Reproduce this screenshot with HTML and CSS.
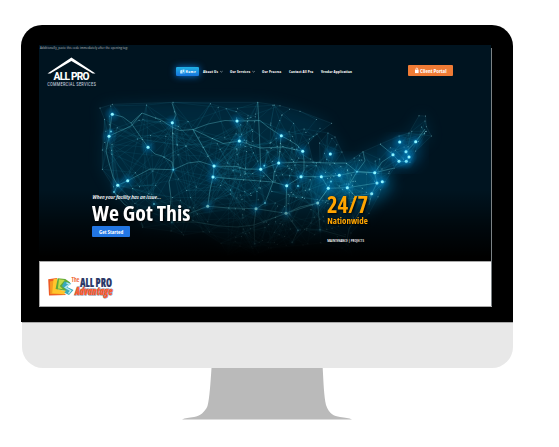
FILE: index.html
```html
<!DOCTYPE html>
<html lang="en">
<head>
<meta charset="utf-8">
<title>All Pro Commercial Services</title>
<link rel="stylesheet" href="styles.css">
</head>
<body>
<main class="monitor">
  <div class="bezel">
    <div class="screen">
      <section class="hero">
        <svg class="map" id="map" viewBox="39 45 452 216" aria-hidden="true"></svg>
        <div class="fade"></div>
        <div class="content">
          <svg class="notice" viewBox="0 0 100 7"><text x="1" y="4.3" textLength="88" lengthAdjust="spacingAndGlyphs">Additionally, paste this code immediately after the opening tag:</text></svg>
          <header class="header">
            <svg class="logo" viewBox="0 0 50 31">
              <path d="M.5 16.600 24.400.5 48.500 16.600h-2.800L24.400 4 3.200 16.600z" fill="#fff"/>
              <text class="brand" x="6.6" y="22.500" textLength="36" lengthAdjust="spacing">ALL PRO</text>
              <text class="sub" x=".3" y="28.700" textLength="48.500" lengthAdjust="spacing">COMMERCIAL SERVICES</text>
            </svg>
            <nav class="nav">
              <a class="home"><svg viewBox="0 0 23 9"><path d="M4.2 3.6 6 2.8v3.6H4.2zM6.400 2.800l2-.4v4h-.7V5H7v1.400h-.6z" fill="#bce9ff"/><text x="9.4" y="6.1" textLength="10.4" lengthAdjust="spacing">Home</text></svg></a>
              <svg class="about" viewBox="0 0 23 9"><text x="0" y="6.1" textLength="15" lengthAdjust="spacing">About Us</text><path class="chevron" d="m17.200 4.200 1.200.9 1.200-.9"/></svg>
              <svg class="services" viewBox="0 0 27 9"><text x="0" y="6.1" textLength="20.2" lengthAdjust="spacing">Our Services</text><path class="chevron" d="m22.400 4.200 1.200.9 1.200-.9"/></svg>
              <svg class="process" viewBox="0 0 20 9"><text x="0" y="6.1" textLength="19.2" lengthAdjust="spacing">Our Process</text></svg>
              <svg class="contact" viewBox="0 0 25 9"><text x="0" y="6.1" textLength="24.2" lengthAdjust="spacing">Contact All Pro</text></svg>
              <svg class="vendor" viewBox="0 0 32 9"><text x="0" y="6.1" textLength="31" lengthAdjust="spacing">Vendor Application</text></svg>
            </nav>
            <a class="portal"><svg viewBox="0 0 45 11"><path d="M7 4.800h3.600v3.300H7z" fill="#fff"/><path d="M7.900 5V4a.9.9 0 0 1 1.800 0v1" fill="none" stroke="#fff" stroke-width=".7"/><text x="12" y="7.900" textLength="26.5" lengthAdjust="spacingAndGlyphs">Client Portal</text></svg></a>
          </header>
          <div class="copy">
            <div class="pitch">
              <svg class="tagline" viewBox="0 0 80 9"><text x=".5" y="6.100" textLength="68.5" lengthAdjust="spacingAndGlyphs">When your facility has an issue...</text></svg>
              <svg class="headline" viewBox="0 0 110 24"><text x="0" y="18.500" textLength="98.5" lengthAdjust="spacingAndGlyphs">We Got This</text></svg>
              <a class="start"><svg viewBox="0 0 38 11"><text x="7" y="7.600" textLength="24.2" lengthAdjust="spacingAndGlyphs">Get Started</text></svg></a>
            </div>
            <div class="coverage">
              <svg class="hours" viewBox="0 0 50 22"><text x="0" y="18.800" textLength="41" lengthAdjust="spacingAndGlyphs">24/7</text></svg>
              <svg class="nation" viewBox="0 0 50 12"><text x=".3" y="7.500" textLength="40.5" lengthAdjust="spacingAndGlyphs">Nationwide</text></svg>
              <svg class="kinds" viewBox="0 0 50 7"><text x=".3" y="5" textLength="36.7" lengthAdjust="spacingAndGlyphs">MAINTENANCE | PROJECTS</text></svg>
            </div>
          </div>
        </div>
      </section>
      <section class="advantage">
        <svg viewBox="0 0 68 23">
          <path d="M.2 2.200 9 1.100l.5 12.500 9 4.500-17.500.3z" fill="#ed5b25"/>
          <path d="M2 4.500 8 3l2.200 12 7 2.500-15-.5z" fill="#f59a20"/>
          <path d="M5.500 2.200 9.500 1.600 8.600 12l9.600 2.300-2 3-12-1z" fill="#ffc52c"/>
          <path d="m9.700 1.200 7.600.8 5 3.600-6 4.300 3.600 4.300-12.300-2.200z" fill="#5fa838"/>
          <path d="m11 2.300 5.800.8-5.100 6 3.200 3.100-5-.8z" fill="#c3db45"/>
          <path d="m16.500 4.500 6.800 2.100-4.200 3.300 6.400 3-4.500 5.200-4.600-2.300 2-2.800-4.500-4z" fill="#37a8bc"/>
          <path d="m18.400 5.800 3.200 1.300-4.400 3.300 5.600 3.200-2.300 2.900" fill="none" stroke="#b5e8f0" stroke-width="1.300"/>
          <text class="the" x="23.500" y="5.300" textLength="8" lengthAdjust="spacingAndGlyphs">The</text>
          <text class="allpro" x="32" y="9.600" textLength="32" lengthAdjust="spacingAndGlyphs">ALL PRO</text>
          <text class="adv" x="27" y="17.900" textLength="37.500" lengthAdjust="spacingAndGlyphs">Advantage</text>
        </svg>
      </section>
      <div class="scrollbar"></div>
    </div>
  </div>
  <div class="chin"></div>
  <svg class="stand" viewBox="0 0 170 52"><path d="M29.500 0H140.700C141.500 15 142 28 144 37c3 9 8 11 14 12 5 1 9 1 12 2.500H0c3-1.500 7-1.500 12-2.500 6-1 11-5 13.500-11C27.500 31 28.500 15 29.500 0z"/></svg>
</main>
<script src="map.js"></script>
</body>
</html>
```
FILE: styles.css
```css
* { box-sizing: border-box; }
body { margin: 0; background: #fff; font-family: "Open Sans", "Noto Sans", sans-serif; }
svg { display: block; flex: none; overflow: visible; }
text { font-family: "Open Sans", "Noto Sans", sans-serif; font-stretch: 75%; font-weight: 700; fill: #fff; }

.monitor { width: 559px; height: 447px; padding: 25px 0 0 21px; overflow: hidden; }
.bezel { width: 492px; height: 297px; padding: 20px 0 0 18px; background: #000; border-radius: 21px 21px 0 0; }
.screen { position: relative; width: 453px; height: 262px; background: #000; }
.chin { width: 491px; height: 46px; margin-left: .5px; background: #e8e8e8; border-top: 1px solid #aaa; border-radius: 0 0 21px 21px; }
.stand { width: 170px; height: 52px; margin-left: 161px; fill: #bababa; }
.scrollbar { position: absolute; right: 0; top: 3px; width: 1px; height: 258px; background: #7b8285; }

.hero { position: relative; width: 452px; height: 216px; background: #001420; overflow: hidden; }
.map { position: absolute; inset: 0; width: 452px; height: 216px; }
.fade { position: absolute; inset: 0; background: linear-gradient(transparent 67%, rgba(0,0,0,.6) 84%, #000 98%); }
.content { position: relative; }

.notice { width: 100px; height: 7px; }
.notice text { font-size: 4px; font-weight: 400; fill: #a5abad; }
.header { display: flex; align-items: flex-start; height: 34px; margin-top: 5px; padding-left: 8px; }
.logo { width: 50px; height: 31px; }
.brand { font-family: "Roboto", sans-serif; font-size: 10.200px; font-weight: 800; font-stretch: 100%; }
.sub { font-family: "Roboto", sans-serif; font-size: 4.600px; font-weight: 400; fill: #d3dbe0; }
.nav { display: flex; height: 9px; margin: 10px 0 0 78.500px; }
.nav svg { height: 9px; }
.nav text { font-size: 3.900px; }
.home { width: 23px; height: 9px; border-radius: 1px; background: linear-gradient(#20b2e5, #1674dd); box-shadow: 0 0 7px #0875d9; }
.home svg { width: 23px; }
.about { width: 23px; margin-left: 4.300px; }
.services { width: 27px; margin-left: 4.200px; }
.process { width: 20px; margin-left: 5.500px; }
.contact { width: 25px; margin-left: 7px; }
.vendor { width: 32px; margin-left: 7px; }
.chevron { fill: none; stroke: #b5c2c9; stroke-width: .6; }
.portal { width: 45px; height: 11px; margin: 8px 0 0 54.500px; background: #ef7b35; border-radius: 1px; }
.portal svg { width: 45px; height: 11px; }
.portal text { font-size: 5.600px; }

.copy { display: flex; padding: 102px 0 0 53px; }
.pitch { width: 235px; }
.tagline { width: 80px; height: 9px; }
.tagline text { font-size: 5.700px; font-style: italic; font-weight: 600; }
.headline { width: 110px; height: 24px; filter: drop-shadow(1px 1px 1px #000); }
.headline text { font-size: 22px; }
.start { display: block; width: 38px; height: 11px; background: #2276e3; border-radius: 1px; }
.start svg { width: 38px; height: 11px; }
.start text { font-size: 5.700px; }
.coverage { padding-top: 1px; }
.hours { width: 50px; height: 22px; }
.hours text { font-size: 22.500px; fill: #ffa500; }
.nation { width: 50px; height: 12px; }
.nation text { font-size: 8.800px; fill: #ffa500; }
.hours, .nation { filter: drop-shadow(1px 1px 1px #000); }
.kinds { width: 50px; height: 7px; margin-top: 9px; }
.kinds text { font-size: 3.900px; font-weight: 600; }

.advantage { width: 453px; height: 46px; padding: 15px 0 0 7.500px; background: #fff; border: solid #aaa; border-width: 1px 0 1px 1px; }
.advantage svg { width: 68px; height: 23px; }
.the { fill: #ef6a38; font-size: 6.500px; }
.allpro { fill: #293766; font-size: 12.500px; font-weight: 800; stroke: #293766; stroke-width: .2; }
.adv { fill: #ff5b2c; font-size: 10px; font-weight: 800; font-style: italic; paint-order: stroke; stroke: #7c8399; stroke-width: 1; }
```
FILE: map.js
```js
// Network map: an outline of nodes, a fine mesh, highways and glowing cities.
const outline = [[100,108],[112.3,104.3],[173,102.3],[257.8,102.3],[280,105.7],[300,111.3],[331.6,123.3],[317,134],[308.4,143],[313,162],[320,162],[319.500,143],[328,133],[335,137],[342,152],[334.400,163.300],[346.500,163.300],[363,151.700],[380.400,144],[399,136],[409,133],[419,115.700],[425.500,116],[426.400,126.700],[431.400,136],[415.700,151],[410,162.300],[394,168.300],[385,181.700],[378,196.700],[369,213.300],[351,233],[348,245],[353,256.700],[342,248],[321,243],[303,245],[271,248],[255,255],[240,246],[228,255],[221,243.300],[203,231.700],[183.600,235],[171,231],[142.600,227.300],[132,210],[116,196.700],[113.400,186.700],[102.300,169.300],[102.300,150],[104.500,119.300]];
const cities = [[112.300,114.300],[109,136.300],[172.300,122.700],[237,121],[239.300,141],[148,147.300],[214,166],[213,177],[260.700,169.300],[127.700,180.700],[117.700,185.300],[281.300,135.700],[302.700,151.300],[330.300,154],[278.700,163],[301,176.700],[321.300,176.700],[339.300,175.300],[374.700,172.700],[286.700,185.700],[328.300,188.300],[347.300,187.700],[377,183],[382.300,181.700],[399.700,142],[415.700,141.700],[406,151.700],[393,154.700],[399,161.300],[406.300,161.300],[409,157],[317.700,203],[371.700,193.700],[286,213.300],[207.700,206.300],[256,208.700]];
const towns = [[173.300,169.700],[264.300,165.700],[357,171.700],[111,131.500],[171.700,222.300],[298,230.300],[292.300,242.300],[254.700,243.700],[320,229.700],[154,204],[114,192],[331,181.500],[265,203],[298,186]];
const routes = [
  "112,114 123,117 131,123 142,113 161,120 172,127 180,130.500 193,129.500 208,124 225,120.500 237,121 260,120.500 268,127 281,135.700 289,140 297,145 302.700,151.300 304,160 304,170 301,176.700",
  "131,123 138,133 148,147.300 155,154 162,156 172,162 173.300,169.700 169,182 171,198 170,213 171.700,222",
  "109,136 120,131 131,126 142,113",
  "112,114 109,136 106,151 109,163 113,177 117.700,185.300 114,192 124,204 139,215 143,227",
  "117.700,185.300 127.700,180.700 150,169 173.300,169.700 188,163 200,161.500 214,166 237,166.500 245,169 260.700,169.300 278.700,163 304,162 330,163 346,163",
  "172,103 176,115 172.300,122.700 173,150 173.300,169.700",
  "193,129.500 214,166 213,177 210,190 207.700,206.300 190,213 171.700,222",
  "193,129.500 223,143.500 239.300,141 260,148 283,147 302.700,151.300",
  "257.800,102.500 259,127 260,150 260.700,169.300 273,182 286.700,185.700 301,176.700 321.300,176.700 339.300,175.300 357,171.700 374.700,172.700 393,168.300",
  "213,177 235,179 260,181 273,182 265,203 256,208.700 254,225 254.700,243.700",
  "207.700,206.300 230,208 256,208.700 286,213.300 317.700,203 328.300,188.300 347.300,187.700 377,183",
  "281,135.700 280,150 278.700,163 274,173 273,182",
  "286.700,185.700 286,213.300 298,230.300 292.300,242.300",
  "321.300,176.700 328.300,188.300 317.700,203 320,229.700 346,237",
  "363,152 365,161 357,171.700 347.300,187.700 355,196 371.700,193.700 369,205",
  "380,144 393,154.700 399,161.300 406.300,161.300 409,157 406,151.700 415.700,141.700 425,129",
  "374.700,172.700 377,183 371.700,193.700 360,211 349,229 346,245",
  "171.700,222 195,222 220,226 237,227 254,225 286,213.300",
  "317.700,203 300,207 286,213.300", "346,163 357,171.700 374.700,172.700 382,162 393,154.700"
];
let seed = 719;
const rnd = () => (seed = (seed * 16807) % 2147483647) / 2147483647;
const inside = (x, y) => {
  let hit = false;
  for (let i = 0, j = outline.length - 1; i < outline.length; j = i++) {
    const [a, b] = outline[i], [c, d] = outline[j];
    if ((b > y) !== (d > y) && x < (c - a) * (y - b) / (d - b) + a) hit = !hit;
  }
  return hit;
};
const nodes = [...outline, ...cities, ...towns];
while (nodes.length < 430) {
  const x = 100 + rnd() * 332, y = 102 + rnd() * 154;
  if (inside(x, y) && rnd() < (x > 235 ? 1 : .28)) nodes.push([x, y]);
}
let mesh = "";
nodes.forEach((p, i) => {
  const reach = p[0] < 235 ? 55 : 27;
  nodes.slice(i + 1).forEach(q => {
    const d = Math.hypot(p[0] - q[0], p[1] - q[1]);
    if (d < reach && rnd() < .17 && inside((p[0] + q[0]) / 2, (p[1] + q[1]) / 2))
      mesh += `M${p[0].toFixed(1)} ${p[1].toFixed(1)}L${q[0].toFixed(1)} ${q[1].toFixed(1)}`;
  });
});
const edge = outline.map(p => p.join()).join(" ");
const dot = (p, r, c, o) => `<circle cx="${p[0]}" cy="${p[1]}" r="${r}" fill="${c}" opacity="${o}"/>`;
document.getElementById("map").innerHTML = `
  <defs>
    <radialGradient id="glow"><stop stop-color="#16b6ff" stop-opacity=".9"/><stop offset=".3" stop-color="#008bd0" stop-opacity=".35"/><stop offset="1" stop-color="#0078bc" stop-opacity="0"/></radialGradient>
    <filter id="soft" x="-20%" y="-20%" width="140%" height="140%"><feGaussianBlur stdDeviation="7"/></filter>
  </defs>
  <polygon points="${edge}" fill="#00547a" opacity=".26" filter="url(#soft)"/>
  <polygon points="${edge}" fill="#00405b" fill-opacity=".15" stroke="#388ba0" stroke-opacity=".35" stroke-width=".4"/>
  <ellipse cx="350" cy="185" rx="42" ry="24" fill="#0080b5" opacity=".4" filter="url(#soft)"/>
  <ellipse cx="403" cy="153" rx="18" ry="15" fill="#007cc0" opacity=".35" filter="url(#soft)"/>
  <path d="${mesh}" fill="none" stroke="#2893ad" stroke-width=".35" opacity=".32"/>
  ${routes.map(r => `<polyline points="${r}" fill="none" stroke="#62c9d4" stroke-width=".6" opacity=".6"/>`).join("")}
  ${nodes.map(p => dot(p, .5, "#9ddce0", .65)).join("")}
  ${cities.map(p => dot(p, 8.5, "url(#glow)", .9) + dot(p, 1.5, "#93f5ff", 1)).join("")}
  ${towns.map(p => dot(p, 4, "url(#glow)", .7) + dot(p, .9, "#69d3e6", .85)).join("")}`;
```
